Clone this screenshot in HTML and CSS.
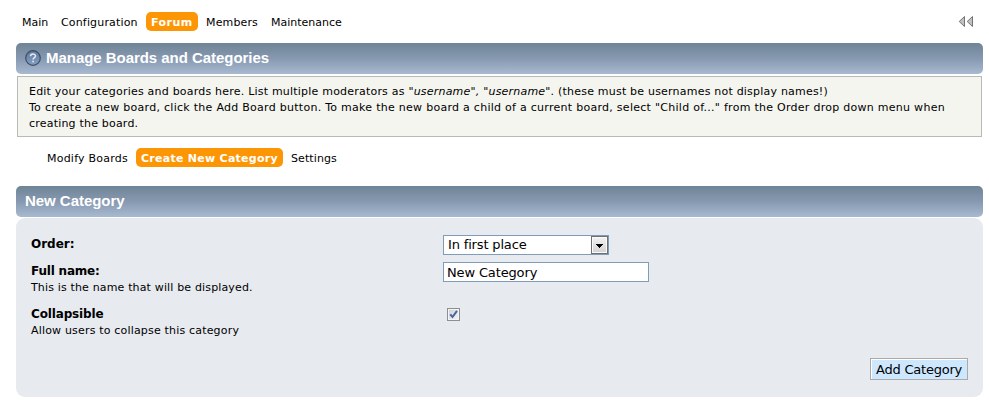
FILE: index.html
```html
<!DOCTYPE html>
<html lang="en">
<head>
<meta charset="utf-8">
<title>Manage Boards and Categories</title>
<link rel="stylesheet" href="styles.css">
</head>
<body>
<header class="top">
  <nav class="menu">
    <a class="item main">Main</a>
    <a class="item config">Configuration</a>
    <a class="item forum active">Forum</a>
    <a class="item members">Members</a>
    <a class="item maint">Maintenance</a>
  </nav>
  <svg class="rewind" width="16" height="12" viewBox="0 0 16 12">
    <path d="M6.500 .5v10L1.200 5.500z" fill="#c0c0c0" stroke="#747474"/>
    <path d="M14.500 .5v10L9.200 5.500z" fill="#c0c0c0" stroke="#747474"/>
  </svg>
</header>
<h3 class="bar">
  <svg class="help" width="16" height="16" viewBox="0 0 16 16">
    <defs><linearGradient id="g" x1="0" y1="0" x2="0" y2="1"><stop offset="0" stop-color="#5f789d"/><stop offset="1" stop-color="#86a0c4"/></linearGradient></defs>
    <circle cx="8" cy="8" r="7.300" fill="url(#g)" stroke="#3d4d66" stroke-width="1.200"/>
    <path d="M5.500 6.200C5.600 3.300 10.500 3.300 10.500 6c0 1.600-2.400 1.700-2.400 3.500" fill="none" stroke="#e4ebf5" stroke-width="1.500"/>
    <rect x="7.300" y="10.700" width="1.600" height="1.600" fill="#e4ebf5"/>
  </svg>
  <span class="manage">Manage Boards and Categories</span>
</h3>
<div class="info">
  <div class="l1">Edit your categories and boards here. List multiple moderators as <i>"username", "username"</i>. (these must be usernames not display names!)</div>
  <div class="l2">To create a new board, click the Add Board button. To make the new board a child of a current board, select "Child of..." from the Order drop down menu when</div>
  <div class="l3">creating the board.</div>
</div>
<nav class="menu sub">
  <a class="item modify">Modify Boards</a>
  <a class="item create active">Create New Category</a>
  <a class="item settings">Settings</a>
</nav>
<h3 class="bar second"><span class="newcat">New Category</span></h3>
<form class="panel">
  <div class="row order">
    <label class="label"><b class="t-order">Order:</b></label>
    <div class="select"><span class="t-first">In first place</span><span class="arrow"><svg width="7" height="4" viewBox="0 0 7 4" shape-rendering="crispEdges"><path d="M0 0h7v1H6v1H5v1H4v1H3V3H2V2H1V1H0z"/></svg></span></div>
  </div>
  <div class="row name">
    <label class="label"><b class="t-full">Full name:</b><small class="t-this">This is the name that will be displayed.</small></label>
    <div class="input"><span class="t-new">New Category</span></div>
  </div>
  <div class="row coll">
    <label class="label"><b class="t-coll">Collapsible</b><small class="t-allow">Allow users to collapse this category</small></label>
    <div class="check"><svg width="9" height="9" viewBox="0 0 9 9"><path d="M1.200 4.300 3.500 7 8 .8" fill="none" stroke="#4a64a0" stroke-width="2"/></svg></div>
  </div>
  <div class="actions"><div class="button"><span class="t-add">Add Category</span></div></div>
</form>
</body>
</html>
```
FILE: styles.css
```css
* { box-sizing: border-box; }
body {
  margin: 0;
  padding: 12px 6px 0 16px;
  height: 408px;
  overflow: hidden;
  background: #fff;
  color: #000;
  font: 11px/16px "DejaVu Sans", Verdana, sans-serif;
  white-space: nowrap;
}
.top { display: flex; justify-content: space-between; height: 31px; }
.menu { display: flex; height: 19px; line-height: 21px; }
.item { height: 19px; border-radius: 5px; margin-right: 8px; text-align: left; }
.active { background: #fd9604; color: #fff; font-weight: bold; }
.main { width: 26px; margin: 0 13px 0 6px; }
.config { width: 77px; letter-spacing: .16px; }
.forum { width: 52px; padding-left: 5px; letter-spacing: .45px; }
.members { width: 52px; margin-right: 13px; letter-spacing: .14px; }
.maint { width: 71px; }
.rewind { margin: 4px 9px 0 0; }
.bar {
  display: flex;
  align-items: center;
  width: 967px;
  height: 31px;
  margin: 0;
  padding: 0 9px 1px;
  border-radius: 5px;
  background: linear-gradient(#6f8496, #8799b1 50%, #a7bad0);
  color: #fff;
  font: bold 15px/30px "Liberation Sans", Arial, sans-serif;
}
.help { margin-right: 5px; }
.manage, .newcat { letter-spacing: -.04px; }
.info {
  width: 965px;
  height: 61px;
  margin: 2px 0 11px 1px;
  padding: 7px 11px 0;
  border: 1px solid #b9b9b6;
  background: #f4f5ef;
}
.l1 { letter-spacing: .21px; }
.l2 { letter-spacing: .274px; }
.l3 { letter-spacing: .2px; }
.sub { padding-left: 31px; }
.modify { width: 81px; letter-spacing: .22px; }
.create { width: 147px; padding-left: 5px; letter-spacing: .27px; }
.settings { width: 46px; letter-spacing: .1px; }
.second { margin-top: 19px; }
.panel {
  width: 967px;
  height: 179px;
  margin-top: 1px;
  padding: 17px 15px 0;
  border-radius: 9px;
  background: #e7eaef;
  font-size: 13px;
}
.row { display: flex; }
.label { width: 412px; padding-top: 1px; }
.label b, .label small { display: block; line-height: 16px; }
.label b { font-size: 12px; }
.label small { font-size: 11px; }
.t-full { letter-spacing: -.2px; }
.t-coll { letter-spacing: -.15px; }
.t-this { letter-spacing: .155px; }
.t-allow { letter-spacing: .18px; }
.label small { padding-top: 1px; }
.order { height: 27px; }
.name { height: 43px; }
.select, .input {
  height: 20px;
  border: 1px solid #7f9db9;
  background: #fff;
  line-height: 18px;
}
.select { display: flex; justify-content: space-between; width: 166px; padding-left: 4px; }
.t-first { letter-spacing: -.16px; }
.arrow {
  display: flex;
  align-items: center;
  justify-content: center;
  width: 17px;
  height: 18px;
  padding-top: 2px;
  border: 1px solid #707070;
  background: linear-gradient(#f2f2f2, #d2d2d2);
  box-shadow: inset 0 0 0 1px #fafafa;
}
.input { width: 206px; padding-left: 3px; line-height: 19px; }
.t-new { letter-spacing: -.14px; }
.check {
  width: 13px;
  height: 13px;
  margin: 3px 0 0 4px;
  padding: 1px;
  border: 1px solid #8e8f8f;
  background: linear-gradient(135deg, #cbcfd5, #f6f6f6);
  box-shadow: inset 0 0 0 1px #f4f4f4;
}
.check svg { display: block; }
.actions { display: flex; justify-content: flex-end; align-items: flex-start; height: 40px; margin-top: 19px; }
.button {
  width: 98px;
  height: 22px;
  border: 1px solid #aaa;
  background: #cde7ff;
  box-shadow: inset 1px 1px #fff;
  padding-left: 5px;
  line-height: 21px;
}
.t-add { letter-spacing: -.22px; }
```
